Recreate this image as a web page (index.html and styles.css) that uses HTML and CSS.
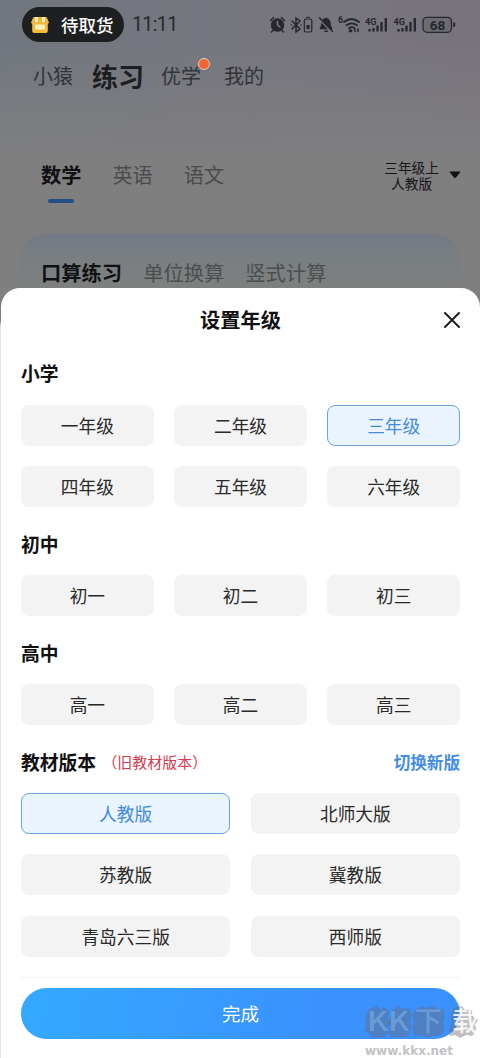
FILE: index.html
```html
<!DOCTYPE html>
<html lang="zh-CN">
<head>
<meta charset="utf-8">
<title>设置年级</title>
<link rel="stylesheet" href="styles.css">
</head>
<body>
<div class="phone">
  <header class="backdrop">
    <div class="status">
      <div class="pill">
        <svg class="box-icon" width="18" height="16" viewBox="0 0 18 16"><path d="M2.500 0h13L18 5.500 16.800 7v7q0 2-2 2H3.200q-2 0-2-2V7L0 5.500z" fill="#f5b83d"/><path d="M4 0h3v4.500q-1.500 1.500-3 0zM11 0h3v4.500q-1.500 1.500-3 0z" fill="#fff0c2"/><rect x="4" y="7.500" width="10" height="5" rx="1" fill="#fff0b8"/></svg>
        <span>待取货</span>
      </div>
      <time class="clock">11:11</time>
      <svg class="status-icons" width="190" height="20" viewBox="0 0 190 20">
        <g fill="none" stroke="#25272c" stroke-width="1.500" stroke-linecap="round">
          <circle cx="8.500" cy="10" r="6" fill="#25272c"/>
          <path d="M1.500 5.500l3-3M15.500 5.500l-3-3M4 15.500l-1.500 1.500M13 15.500l1.500 1.500"/>
          <path d="M8.500 6.500V10l2.500 2" stroke="#7b7d84"/>
          <path d="M23 6l8 8-4 3V3l4 3-8 8M22.500 10h.1M32 10h.1"/>
          <rect x="35.300" y="4" width="7.500" height="13" rx="1.500" stroke-width="1.200"/>
          <path d="M37.500 2.300h3" stroke-width="1"/>
          <rect x="37.500" y="10" width="3.200" height="4" fill="#25272c" stroke="none"/>
          <path d="M51 13.500q2-1 2-4.500 0-4.500 4-5.500 4 1 4 5.500 0 3.500 2 4.500z" fill="#25272c"/>
          <path d="M56 16.300h2.500"/>
          <path d="M50.500 4.500l12 12.500" stroke="#777980" stroke-width="1.500"/>
          <path d="M50.500 2.800l13 13.500"/>
          <path d="M75 7q7.500-6 15 0M77.500 10.300q5-4 10.500 0M80 13.200q2.700-2.200 5.500 0" stroke-width="1.800"/>
          <circle cx="81.500" cy="15.800" r="1.300" fill="#25272c" stroke-width="1"/>
          <path d="M86 14.500v2M89 14v2.500" stroke-width="1.500"/>
          <path d="M100.500 14v2.500M104.500 13v3.500M108.500 10.500v6M112.500 7v9.500M116.800 3v13.500M129.500 14v2.500M133.500 13v3.500M137.500 10.500v6M141.500 7v9.500M145.800 3v13.500" stroke-width="2.300" stroke-linecap="butt"/>
          <rect x="154" y="2.300" width="28.500" height="15" rx="4" fill="#6c6a72" stroke-width="1.300"/>
          <path d="M185.200 8.500v2.500" stroke-width="2"/>
        </g>
        <g class="tiny-labels">
          <text x="69" y="8" font-size="8.500">6</text>
          <text x="96" y="9.500" font-size="9.500" textLength="11.500" lengthAdjust="spacingAndGlyphs">4G</text>
          <text x="124.500" y="9.500" font-size="9.500" textLength="11.500" lengthAdjust="spacingAndGlyphs">4G</text>
          <text x="168.500" y="14.600" font-size="13.500" text-anchor="middle">68</text>
        </g>
      </svg>
    </div>
    <nav class="main-nav">
      <span>小猿</span><span class="current">练习</span><span class="with-dot">优学<i class="dot"></i></span><span>我的</span>
    </nav>
    <div class="subjects">
      <span class="subject active">数学</span><span class="subject">英语</span><span class="subject">语文</span>
      <div class="grade-picker">
        <span>三年级上<br>人教版</span>
        <svg width="12" height="8" viewBox="0 0 12 8"><path d="M1.500.5h9q1.500 0 .5 1L7 6.500q-1 1-2 0L1 1.500q-1-1 .5-1z" fill="#101114"/></svg>
      </div>
    </div>
    <div class="card"><span class="active">口算练习</span><span>单位换算</span><span>竖式计算</span></div>
  </header>
  <main class="sheet">
    <div class="sheet-head">
      <h1>设置年级</h1>
      <svg class="close" width="16" height="16" viewBox="0 0 16 16"><path d="M1 1l14 14M15 1L1 15" stroke="#1c1c1e" stroke-width="1.900" stroke-linecap="round"/></svg>
    </div>
    <section>
      <h2>小学</h2>
      <div class="grid three">
        <button>一年级</button><button>二年级</button><button class="selected">三年级</button>
        <button>四年级</button><button>五年级</button><button>六年级</button>
      </div>
    </section>
    <section>
      <h2>初中</h2>
      <div class="grid three"><button>初一</button><button>初二</button><button>初三</button></div>
    </section>
    <section>
      <h2>高中</h2>
      <div class="grid three"><button>高一</button><button>高二</button><button>高三</button></div>
    </section>
    <section>
      <h2>教材版本<small>（旧教材版本）</small><a class="switch">切换新版</a></h2>
      <div class="grid two">
        <button class="selected">人教版</button><button>北师大版</button>
        <button>苏教版</button><button>冀教版</button>
        <button>青岛六三版</button><button>西师版</button>
      </div>
    </section>
    <footer>
      <button class="done">完成</button>
    </footer>
  </main>
  <div class="watermark">
    <svg width="117" height="66" viewBox="0 -10 117 66">
      <g fill="#686a70" fill-opacity=".42">
        <path d="M6 4l8-3 4 4 3-3 5 4-1 8 2 5-3 5 1 5-5 4-6-1-5 1-3-5-5-2 2-6-1-6z"/>
        <path d="M29 5l7-4 4 3 6-1 3 6-2 6 2 6-3 6 1 3-7 3-6-1-5 1-4-6 2-5-2-6 3-5z"/>
        <path d="M52 5l6-4 5 2 7-2 5 3 6 0 1 9-2 6 2 6-5 6-8 0-5 2-7-3-6 1-2-8 2-5-2-7z"/>
        <path d="M91 2l8-1 3 4 6-1 2 7 5 4-3 5 2 5-5 6-6-1-6 3-5-3-5 1-1-7 3-6-2-6z"/>
      </g>
      <g class="brand"><text x="4" y="26" textLength="42" lengthAdjust="spacingAndGlyphs">KK</text><text x="52" y="26">下</text><text class="strong" x="89" y="26">载</text></g>
      <text class="site" x="2" y="50" textLength="88" lengthAdjust="spacingAndGlyphs">www.kkx.net</text>
    </svg>
  </div>
</div>
</body>
</html>
```
FILE: styles.css
```css
* { box-sizing: border-box; }
body {
  margin: 0;
  font-family: "Noto Sans CJK SC", sans-serif;
  color: #242424;
}
.phone {
  position: relative;
  width: 480px;
  height: 1058px;
  overflow: hidden;
  background: linear-gradient(180deg, rgba(127,127,128,0) 40px, #7f7f80 165px), linear-gradient(90deg, #71777f, #77767f 60%, #78737d);
  background-color: #7f7f80;
}
.backdrop { height: 288px; display: flex; flex-direction: column; overflow: hidden; }
.status { height: 50px; padding: 7px 0 8px 22px; display: flex; align-items: center; }
.pill {
  width: 102px; height: 35px; border-radius: 18px;
  background: #1d1f21; color: #fff;
  display: flex; align-items: center; gap: 12px; padding-left: 9px;
  font-size: 17.500px; font-weight: 500; line-height: 35px; white-space: nowrap;
}
.box-icon { flex: none; }
.clock { margin-left: 8px; width: 47px; font-family: Roboto, sans-serif; font-size: 19.500px; color: #26292e; letter-spacing: -.6px; }
.status-icons { margin-left: 90px; flex: none; }
.tiny-labels { font-family: Roboto, sans-serif; font-weight: 700; fill: #25272c; }
.main-nav {
  height: 52px; padding-left: 33px; display: flex; align-items: center;
  font-size: 20px; line-height: 30px; color: #303338;
}
.main-nav .current { margin: 0 17px 0 19px; font-size: 26px; font-weight: 700; color: #1c1e21; }
.with-dot { position: relative; margin-right: 23px; }
.dot {
  position: absolute; right: -9px; top: -3px; width: 12px; height: 12px;
  border-radius: 50%; border: 1px solid #d9d0cd; background: #f3642f;
}
.subjects {
  height: 132px; padding: 57px 19px 0 41px; display: flex; align-items: flex-start; gap: 31px;
  font-size: 20.200px; line-height: 32px; color: #4b4b4d;
}
.subject.active { font-weight: 700; color: #101012; display: flex; flex-direction: column; align-items: center; gap: 8px; }
.subject.active::after { content: ""; width: 26px; height: 4px; border-radius: 2px; background: #224f89; }
.grade-picker {
  margin-left: auto; display: flex; align-items: center; gap: 10px;
  font-size: 13.700px; line-height: 16px; text-align: center; color: #151517;
}
.card {
  height: 54px; margin: 0 20px; padding: 23px 0 0 21px; border-radius: 24px 24px 0 0;
  background: linear-gradient(#747a87, #797e82 24px, #7e8080 52px);
  display: flex; gap: 21px; font-size: 20.300px; line-height: 30px; color: #4b4d4e;
}
.card .active { font-weight: 700; color: #101112; }
.sheet {
  height: 770px; margin-left: 1px; padding: 0 20px; background: #fff;
  border-radius: 19px 19px 0 0; box-shadow: -1px 20px 0 #e3e3e5;
}
.sheet-head { height: 64px; display: grid; grid-template-columns: 16px 1fr 16px; align-items: center; }
h1 { grid-column: 2; margin: 0; padding-bottom: 2px; font-size: 20.200px; font-weight: 700; text-align: center; color: #111; }
.close { grid-column: 3; }
section { padding-bottom: 20px; }
h2 {
  display: flex; align-items: center; height: 48px; margin: 0; padding-bottom: 15px;
  font-size: 18.800px; line-height: 28px; font-weight: 700; color: #111;
}
.sheet-head + section h2 { height: 53px; padding-bottom: 12px; }
h2 small { margin-left: 6px; font-size: 15px; font-weight: 400; color: #d43c50; }
.switch { margin-left: auto; font-size: 16.600px; font-weight: 700; color: #438ee5; }
.grid { display: grid; gap: 20.200px 20.500px; }
.three { grid-template-columns: repeat(3, 1fr); }
.two { grid-template-columns: repeat(2, 1fr); }
button {
  height: 41px; padding: 0 0 1px; border: 0; border-radius: 8px;
  background: #f3f3f3; color: #292929; font: 400 17.700px "Noto Sans CJK SC", sans-serif;
}
button.selected { border: 1px solid #6aa4da; background: #eaf4fe; color: #438bdb; }
footer { border-top: 1px solid #f5f3f2; padding-top: 10px; }
.done {
  display: block; width: 100%; height: 51px; border-radius: 26px; color: #fff; font-size: 18.500px;
  background: linear-gradient(100deg, #34a9ff, #3a91fe 70%, #3b91ff);
}
.watermark { position: absolute; left: 363px; top: 995px; line-height: 0; }
.brand { font: 500 27px "Noto Sans CJK SC", sans-serif; fill: #9cc9fa; fill-opacity: .4; }
.brand .strong { fill: #fff; fill-opacity: .85; }
.site { font: 700 12px "DejaVu Sans", sans-serif; fill: #c3c3c5; }
```
